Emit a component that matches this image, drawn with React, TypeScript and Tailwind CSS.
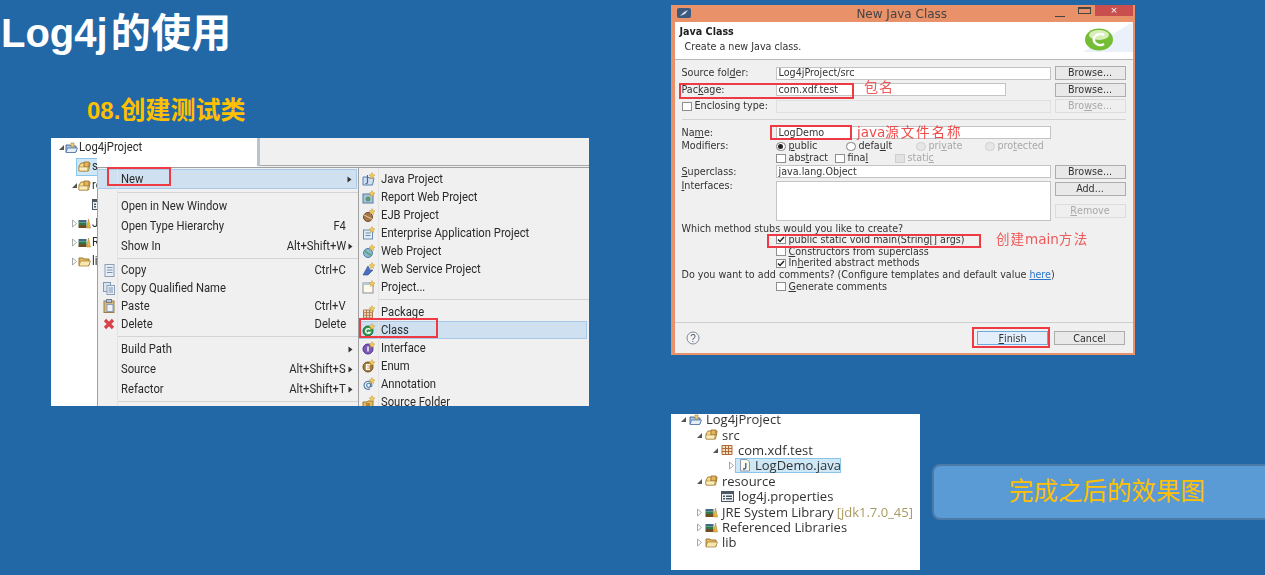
import React from "react";

const Pkg = () => (
  <svg width="13" height="12" viewBox="0 0 13 12" className="shrink-0">
    <path d="M1 5 L3 2 H12 V3 L10.5 10 H1 Z" fill="#f2d98c" stroke="#a8853a" strokeWidth="1" />
    <path d="M6 1 H11 V6 H6 Z" fill="#e2b55a" stroke="#97672a" strokeWidth="0.8" />
    <path d="M1 6 H10 L9.5 10 H1 Z" fill="#fbeebb" stroke="#a8853a" strokeWidth="0.6" />
  </svg>
);
const Project = () => (
  <svg width="13" height="12" viewBox="0 0 13 12" className="shrink-0">
    <path d="M1 3 H5 L6 4 H11 V10 H1 Z" fill="#a9c4e4" stroke="#4d6f9c" />
    <path d="M2.5 6 H12.5 L10.5 10.5 H1 Z" fill="#e4eefa" stroke="#4d6f9c" strokeWidth="0.8" />
    <path d="M6 1 H9 V5 H6 Z" fill="#f0cf72" stroke="#a57f2a" strokeWidth="0.6" />
  </svg>
);
const Books = () => (
  <svg width="13" height="11" viewBox="0 0 13 11" className="shrink-0">
    <rect x="0.5" y="2" width="8" height="2.5" fill="#3f6b88" />
    <rect x="0.5" y="4.5" width="8" height="2.5" fill="#2d7a4b" />
    <rect x="0.5" y="7" width="8" height="3" fill="#6d4c26" />
    <path d="M8.5 10 L10.5 1 L12.5 10 Z" fill="#e8b93c" stroke="#a57f2a" strokeWidth="0.5" />
  </svg>
);
const Folder = () => (
  <svg width="13" height="11" viewBox="0 0 13 11" className="shrink-0">
    <path d="M1 2 H5 L6 3 H11 V9.5 H1 Z" fill="#e2bc65" stroke="#a0792c" />
    <path d="M2.5 5 H12.5 L10.5 10 H1 Z" fill="#f8e7ae" stroke="#a0792c" strokeWidth="0.7" />
  </svg>
);
const PropFile = () => (
  <svg width="13" height="11" viewBox="0 0 13 11" className="shrink-0">
    <rect x="0.5" y="0.5" width="12" height="10" fill="#eef1f4" stroke="#4a5866" />
    <rect x="1" y="1" width="11" height="2" fill="#4a5866" />
    <rect x="2" y="4.5" width="2" height="1.5" fill="#4a5866" />
    <rect x="5" y="4.5" width="6" height="1.5" fill="#4a5866" />
    <rect x="2" y="7" width="2" height="1.5" fill="#4a5866" />
    <rect x="5" y="7" width="6" height="1.5" fill="#4a5866" />
  </svg>
);
const PkgGrid = () => (
  <svg width="12" height="12" viewBox="0 0 12 12" className="shrink-0">
    <path d="M1 1.5 H11 V10.5 H1 Z M1 4.5 H11 M1 7.5 H11 M4.5 1.5 V10.5 M7.5 1.5 V10.5" fill="#f3e3c2" stroke="#b0683a" strokeWidth="1" />
  </svg>
);
const JavaFile = () => (
  <svg width="12" height="13" viewBox="0 0 12 13" className="shrink-0">
    <path d="M1.5 0.5 H8 L10.5 3 V12 H1.5 Z" fill="#fdf9e8" stroke="#8a9ab0" />
    <path d="M6.8 4 V8.6 Q6.8 10 5.4 10 H4" fill="none" stroke="#3a5a9c" strokeWidth="1.3" />
  </svg>
);
const Open = () => (
  <svg width="7" height="7" viewBox="0 0 7 7" className="shrink-0"><path d="M1 6 H6 V1 Z" fill="#555" /></svg>
);
const Closed = () => (
  <svg width="7" height="9" viewBox="0 0 7 9" className="shrink-0"><path d="M1.5 1 L5.5 4.5 L1.5 8 Z" fill="#fff" stroke="#a8a8a8" /></svg>
);
const Chevron = () => (
  <svg width="5" height="7" viewBox="0 0 5 7" className="shrink-0"><path d="M0.5 0.5 L4.5 3.5 L0.5 6.5 Z" fill="#333" /></svg>
);

const CopyIcon = ({ n = 0 }: { n?: number }) => (
  <svg width="12" height="13" viewBox="0 0 12 13">
    {n === 1 && <rect x="0.5" y="0.5" width="7" height="9" fill="#d8e4f0" stroke="#7f9ab8" />}
    <rect x={n === 1 ? 4 : 2} y={n === 1 ? 3.5 : 0.5} width={n === 1 ? 7.5 : 9} height={n === 1 ? 9 : 12} fill="#e8eef6" stroke="#8aa0b8" />
    <path d={n === 1 ? "M5.5 6 H10 M5.5 8 H10 M5.5 10 H10" : "M4 3.5 H9.5 M4 6 H9.5 M4 8.5 H9.5"} stroke="#7b94ae" />
  </svg>
);
const PasteIcon = () => (
  <svg width="12" height="14" viewBox="0 0 12 14">
    <rect x="1" y="2" width="10" height="11.5" fill="#d9b878" stroke="#9a7d48" />
    <rect x="3.5" y="0.5" width="5" height="3" fill="#b9c4d0" stroke="#6f7f90" />
    <rect x="4" y="5.5" width="6" height="7" fill="#eef2f6" stroke="#8aa0b8" />
  </svg>
);
const DeleteIcon = () => (
  <svg width="12" height="12" viewBox="0 0 12 12"><path d="M2 2 L10 10 M10 2 L2 10" stroke="#d8404a" strokeWidth="3.2" /></svg>
);

const Wiz = ({ kind }: { kind: string }) => {
  const star = <path d="M10 0.5 L11 2.5 L13 3 L11.3 4.5 L11.6 6.5 L10 5.5 L8.4 6.5 L8.7 4.5 L7 3 L9 2.5 Z" fill="#efc95a" stroke="#b8902f" strokeWidth="0.4" />;
  const ball = (fill: string, stroke: string, letter: string) => (
    <>
      <circle cx="6" cy="8" r="5" fill={fill} stroke={stroke} />
      <path d={letter} fill="none" stroke="#fff" strokeWidth="1.4" />
    </>
  );
  return (
    <svg width="14" height="14" viewBox="0 0 14 14">
      {kind === "java" && <><path d="M1 5 H6 L7 6 H12 L10.5 13 H1 Z" fill="#cfe0f3" stroke="#5e7fa8" /><path d="M5.5 3 V10 Q5.5 12 3.5 11.5" fill="none" stroke="#4668a0" strokeWidth="1.2" /></>}
      {kind === "report" && <><rect x="1" y="4" width="10" height="9" fill="#a9c6e0" stroke="#587a9c" /><circle cx="6" cy="9" r="2.5" fill="#5a9a6e" /></>}
      {kind === "ejb" && <><circle cx="6" cy="9" r="4.5" fill="#a5764a" stroke="#6f4a28" /><path d="M2 7 L10 11" stroke="#e8d0a8" /></>}
      {kind === "ent" && <><rect x="1.5" y="4" width="9" height="9" fill="#e4edf7" stroke="#6a8cb0" /><path d="M3.5 7 H8.5 M3.5 9.5 H8.5" stroke="#6a8cb0" /></>}
      {kind === "web" && <><circle cx="6" cy="9" r="4.5" fill="#86b8d8" stroke="#4f7d9c" /><path d="M3 7 Q6 10 9 11" stroke="#5fa05f" fill="none" strokeWidth="1.4" /></>}
      {kind === "ws" && <path d="M1 13 L6 4 L8 8 L11 8 L6 13 Z" fill="#4a6fc0" stroke="#2f4d96" strokeWidth="0.6" />}
      {kind === "proj" && <><rect x="1" y="3" width="10" height="10" fill="#fdf8ea" stroke="#8a8f9a" /><rect x="1" y="3" width="10" height="2" fill="#b8c8dc" /></>}
      {kind === "pkg" && <path d="M1.5 5 H10.5 V13 H1.5 Z M1.5 7.7 H10.5 M1.5 10.3 H10.5 M4.5 5 V13 M7.5 5 V13" fill="#f1e2c6" stroke="#b27a50" />}
      {kind === "class" && ball("#2f9a52", "#1c6e36", "M8 6.5 A2.4 2.4 0 1 0 8 9.5 H6")}
      {kind === "int" && ball("#7a58b4", "#503690", "M6 5.5 V10.5")}
      {kind === "enum" && ball("#a77a3a", "#75511f", "M8 5.8 H4.5 V10.2 H8 M4.5 8 H7.5")}
      {kind === "ann" && <path d="M8.5 9 A2 2 0 1 1 8.5 7.5 V9.5 Q10 10 10 8 A4 4 0 1 0 8 11.8" fill="none" stroke="#4a7aa8" strokeWidth="1.1" />}
      {kind === "src" && <><path d="M1 7 H5 L6 6 H11 V13 H1 Z" fill="#e2bc65" stroke="#a0792c" /><path d="M4 8 H8 V12 H4 Z" fill="#b7823a" /></>}
      {star}
    </svg>
  );
};

const Narrow = ({ children, right }: { children: React.ReactNode; right?: boolean }) => (
  <span className={`inline-block whitespace-nowrap scale-x-90 ${right ? "origin-right" : "origin-left"}`}>{children}</span>
);

const Row = ({ label, right, arrow, icon, h = "h-5", active }: { label: string; right?: string; arrow?: boolean; icon?: React.ReactNode; h?: string; active?: boolean }) => (
  <div className={`${h} flex items-center mr-px ${active ? "bg-[#cfe0f1] border border-[#a9c9e8] -ml-px" : ""}`}>
    <span className="w-[20px] ml-[1px] shrink-0 flex justify-center">{icon}</span>
    <span className="ml-[2px]"><Narrow>{label}</Narrow></span>
    {right && <span className="ml-auto"><Narrow right>{right}</Narrow></span>}
    <span className={`w-[9px] shrink-0 mr-[2px] flex justify-center ${right ? "" : "ml-auto"}`}>{arrow && <Chevron />}</span>
  </div>
);
const MenuSep = ({ h }: { h: string }) => (
  <div className={`${h} flex items-center pl-[20px]`}><div className="h-px w-full bg-[#d4d4d4]" /></div>
);

const SubRow = ({ kind, label, active }: { kind: string; label: string; active?: boolean }) => (
  <div className={`h-[18px] flex items-center ${active ? "bg-[#cfe0f1] border border-[#a9c9e8] pl-[2px] mr-[2px]" : "pl-[3px]"}`}>
    <span className="w-[14px] shrink-0 flex"><Wiz kind={kind} /></span>
    <span className="ml-[5px]"><Narrow>{label}</Narrow></span>
  </div>
);

const TreeRow = ({ arrow, icon, label, pl, selected }: { arrow?: React.ReactNode; icon: React.ReactNode; label: string; pl: string; selected?: boolean }) => (
  <div className={`h-[19px] flex items-center whitespace-nowrap ${pl}`}>
    <span className="w-[7px] shrink-0 flex">{arrow}</span>
    <span className={`flex items-center ${selected ? "h-[18px] w-[31px] shrink-0 -ml-[2px] pl-[1px] bg-[#cfe8f8] border border-[#8cc4ea]" : ""}`}>
      <span className="w-[14px] shrink-0 flex">{icon}</span>
      <Narrow>{label}</Narrow>
    </span>
  </div>
);

const ContextShot = () => (
  <div className="relative w-[538px] h-[268px] flex bg-[#f0f0f0] overflow-hidden text-[12.5px] leading-none text-[#2a2a2a] [font-family:Roboto,sans-serif] [filter:blur(0.35px)]">
    <div className="w-[206px] h-full bg-white shrink-0">
      <TreeRow pl="pl-[7px]" arrow={<Open />} icon={<Project />} label="Log4jProject" />
      <div className="w-[46px] overflow-hidden">
        <TreeRow pl="pl-[20px]" icon={<Pkg />} label="src" selected />
        <TreeRow pl="pl-[20px]" arrow={<Open />} icon={<Pkg />} label="resource" />
        <TreeRow pl="pl-[34px]" icon={<PropFile />} label="log4j.properties" />
        <TreeRow pl="pl-[20px]" arrow={<Closed />} icon={<Books />} label="JRE System Library" />
        <TreeRow pl="pl-[20px]" arrow={<Closed />} icon={<Books />} label="Referenced Libraries" />
        <TreeRow pl="pl-[20px]" arrow={<Closed />} icon={<Folder />} label="lib" />
      </div>
    </div>
    <div className="w-[3px] h-[28px] bg-[#b6c3d1] shrink-0" />
    <div className="flex-1 h-[28px] border-b border-[#a8a8a8]" />
    <div className="absolute left-[46px] top-[29px] w-[261px] h-[239px] bg-[#f0f0f0] border-l border-t border-[#a0a0a0] pt-px">
      <div className="absolute left-[19px] top-0 bottom-0 w-px bg-[#e3e3e3]" />
      <Row label="New" arrow active />
      <MenuSep h="h-[7px]" />
      <Row label="Open in New Window" />
      <Row label="Open Type Hierarchy" right="F4" />
      <Row label="Show In" right="Alt+Shift+W" arrow />
      <MenuSep h="h-[5px]" />
      <Row h="h-[18px]" label="Copy" right="Ctrl+C" icon={<CopyIcon />} />
      <Row h="h-[18px]" label="Copy Qualified Name" icon={<CopyIcon n={1} />} />
      <Row h="h-[18px]" label="Paste" right="Ctrl+V" icon={<PasteIcon />} />
      <Row h="h-[18px]" label="Delete" right="Delete" icon={<DeleteIcon />} />
      <MenuSep h="h-[6px]" />
      <Row label="Build Path" arrow />
      <Row label="Source" right="Alt+Shift+S" arrow />
      <Row label="Refactor" right="Alt+Shift+T" arrow />
      <MenuSep h="h-[4px]" />
    </div>
    <div className="absolute left-[307px] top-[29px] w-[231px] h-[239px] bg-[#f0f0f0] border-l border-t border-[#a0a0a0] pt-[2px]">
      <div className="absolute left-[19px] top-0 bottom-0 w-px bg-[#e3e3e3]" />
      <SubRow kind="java" label="Java Project" />
      <SubRow kind="report" label="Report Web Project" />
      <SubRow kind="ejb" label="EJB Project" />
      <SubRow kind="ent" label="Enterprise Application Project" />
      <SubRow kind="web" label="Web Project" />
      <SubRow kind="ws" label="Web Service Project" />
      <SubRow kind="proj" label="Project..." />
      <div className="h-[7px] flex items-center pl-[20px]"><div className="h-px w-full bg-[#d4d4d4]" /></div>
      <SubRow kind="pkg" label="Package" />
      <SubRow kind="class" label="Class" active />
      <SubRow kind="int" label="Interface" />
      <SubRow kind="enum" label="Enum" />
      <SubRow kind="ann" label="Annotation" />
      <div className="h-[13px] overflow-hidden"><SubRow kind="src" label="Source Folder" /></div>
    </div>
    <div className="absolute left-[56px] top-[29px] w-[64px] h-[19px] border-2 border-[#ee3a42]" />
    <div className="absolute left-[308px] top-[180px] w-[79px] h-[20px] border-2 border-[#ee3a42]" />
  </div>
);

const Btn = ({ children, disabled, className = "" }: { children: React.ReactNode; disabled?: boolean; className?: string }) => (
  <div className={`w-[71px] h-[14px] flex items-center justify-center border shrink-0 ${disabled ? "border-[#dcdcdc] text-[#a8a8a8] bg-[#efefef]" : "border-[#adadad] bg-[#e9e9e9] text-[#333]"} ${className}`}>{children}</div>
);
const Inp = ({ children, w = "w-[275px]", disabled }: { children?: React.ReactNode; w?: string; disabled?: boolean }) => (
  <div className={`${w} h-[13px] flex items-center pl-[2px] border shrink-0 ${disabled ? "bg-[#efefef] border-[#e0e0e0]" : "bg-white border-[#c4c4c4]"}`}>{children}</div>
);
const Box = ({ checked, disabled }: { checked?: boolean; disabled?: boolean }) => (
  <span className={`inline-flex items-center justify-center w-[10px] h-[9px] border shrink-0 ${disabled ? "bg-[#e2e2e2] border-[#cfcfcf]" : "bg-white border-[#8e8e8e]"}`}>
    {checked && <svg width="8" height="7" viewBox="0 0 8 7"><path d="M1 3.5 L3 5.5 L7 1" fill="none" stroke="#222" strokeWidth="1.5" /></svg>}
  </span>
);
const Radio = ({ on, disabled }: { on?: boolean; disabled?: boolean }) => (
  <span className={`inline-flex items-center justify-center w-[10px] h-[9px] rounded-full border shrink-0 ${disabled ? "bg-[#e6e6e6] border-[#cfcfcf]" : "bg-white border-[#7e7e7e]"}`}>
    {on && <span className="w-[5px] h-[5px] rounded-full bg-[#222]" />}
  </span>
);
const Label = ({ children }: { children: React.ReactNode }) => <span className="w-[94px] shrink-0">{children}</span>;
const FRow = ({ h = "h-[16.5px]", children }: { h?: string; children: React.ReactNode }) => (
  <div className={`${h} flex items-center`}>{children}</div>
);
const Check = ({ children, checked }: { children: React.ReactNode; checked?: boolean }) => (
  <div className="h-[11.7px] flex items-center pl-[94px] gap-[3px]"><Box checked={checked} /><span>{children}</span></div>
);

const Dialog = () => (
  <div className="relative w-[464px] h-[350px] bg-[#e9926a] pl-[3.5px] pr-[2px] pb-[2px] flex flex-col text-[9.6px] leading-none text-[#333] [font-family:'DejaVu_Sans',sans-serif] [filter:blur(0.35px)]">
    <div className="h-[17px] shrink-0 relative flex items-center justify-center text-[12px] pr-[4px] text-[#444]">
      <span className="absolute left-[2px] top-[3px] w-[14px] h-[10px] rounded-[2px] bg-[#3c5a80] flex items-center justify-center">
        <svg width="10" height="8" viewBox="0 0 10 8"><path d="M1 7 L5 3 L9 1 L6 5 Z" fill="#d8e4f0" /></svg>
      </span>
      <span>New Java Class</span>
      <span className="absolute right-[68px] top-[11px] w-[10px] h-px bg-[#444]" />
      <span className="absolute right-[42px] top-[2px] w-[13px] h-[7px] border border-[#444] border-t-2" />
      <span className="absolute right-0 top-0 w-[38px] h-[11px] bg-[#c94f4f] flex items-center justify-center text-white text-[9px]">×</span>
    </div>
    <div className="h-[38px] shrink-0 bg-white border-b border-[#b8b8b8] relative pl-[5px] pt-[5px] overflow-hidden">
      <div className="absolute right-0 top-0 w-[50px] h-[30px] bg-[#eaf1fa] [clip-path:polygon(100%_0,100%_100%,0_100%)]" />
      <div className="font-bold text-[#222]">Java Class</div>
      <div className="mt-[5px] pl-[5px]">Create a new Java class.</div>
      <svg className="absolute right-[19px] top-[6px]" width="30" height="23" viewBox="0 0 30 23">
        <ellipse cx="15" cy="11.5" rx="14" ry="11" fill="#74bd35" />
        <ellipse cx="15" cy="7" rx="10" ry="5" fill="#d6eeb8" />
        <path d="M20 7 A6.5 5.5 0 1 0 20 16" fill="none" stroke="#fff" strokeWidth="2.6" />
      </svg>
    </div>
    <div className="flex-1 bg-[#f0f0f0] flex flex-col pl-[7px] pr-[7px] pt-[5px]">
      <FRow><Label>Source fol<u>d</u>er:</Label><Inp>Log4jProject/src</Inp><Btn className="ml-[4px]">Browse...</Btn></FRow>
      <FRow><Label>Pac<u>k</u>age:</Label><Inp w="w-[230px]">com.xdf.test</Inp><Btn className="ml-[49px]">Browse...</Btn></FRow>
      <FRow><span className="w-[94px] shrink-0 flex items-center gap-[3px]"><Box />Enclosing type:</span><Inp disabled /><Btn disabled className="ml-[4px]">Bro<u>w</u>se...</Btn></FRow>
      <div className="h-px bg-[#d2d2d2] mt-[4px] mb-[6.5px]" />
      <FRow h="h-[13px]"><Label>Na<u>m</u>e:</Label><Inp>LogDemo</Inp></FRow>
      <FRow h="h-[14px]"><Label>Modifiers:</Label>
        <span className="flex items-center gap-[3px] w-[70px]"><Radio on /><span><u>p</u>ublic</span></span>
        <span className="flex items-center gap-[3px] w-[70px]"><Radio /><span>defa<u>u</u>lt</span></span>
        <span className="flex items-center gap-[3px] w-[69px] text-[#a8a8a8]"><Radio disabled /><span>pri<u>v</u>ate</span></span>
        <span className="flex items-center gap-[3px] text-[#a8a8a8]"><Radio disabled /><span>pro<u>t</u>ected</span></span>
      </FRow>
      <FRow h="h-[10px]"><span className="w-[94px] shrink-0" />
        <span className="flex items-center gap-[3px] w-[59px]"><Box /><span>abs<u>t</u>ract</span></span>
        <span className="flex items-center gap-[3px] w-[60px]"><Box /><span>fina<u>l</u></span></span>
        <span className="flex items-center gap-[3px] text-[#a8a8a8]"><Box disabled /><span>stati<u>c</u></span></span>
      </FRow>
      <FRow h="h-[17px]"><Label><u>S</u>uperclass:</Label><Inp>java.lang.Object</Inp><Btn className="ml-[4px]">Browse...</Btn></FRow>
      <div className="h-[40px] flex mt-[1px]">
        <span className="w-[94px] shrink-0"><u>I</u>nterfaces:</span>
        <div className="w-[275px] h-[40px] bg-white border border-[#c4c4c4] shrink-0" />
        <div className="ml-[4px] pt-px flex flex-col gap-[8px]"><Btn>Add...</Btn><Btn disabled><u>R</u>emove</Btn></div>
      </div>
      <div className="h-[11px] mt-[2px] flex items-center">Which method stubs would you like to create?</div>
      <Check checked>public static void main(String[] args)</Check>
      <Check><u>C</u>onstructors from superclass</Check>
      <Check checked>In<u>h</u>erited abstract methods</Check>
      <div className="h-[11.7px] flex items-center">Do you want to add comments? (Configure templates and default value <u className="text-[#2a76c8] ml-[3px]">here</u>)</div>
      <Check><u>G</u>enerate comments</Check>
      <div className="h-px bg-[#cfcfcf] -ml-[7px] -mr-[7px] mt-[30px]" />
      <div className="flex items-center justify-between mt-[8px] pr-px">
        <svg width="14" height="14" viewBox="0 0 14 14" className="ml-[4px]"><circle cx="7" cy="7" r="6" fill="#f4f4f4" stroke="#7a8a98" /><text x="7" y="10.5" textAnchor="middle" fontSize="10" fill="#556" fontFamily="Liberation Sans">?</text></svg>
        <div className="flex gap-[6px]">
          <Btn className="border-[#6fa8dc]! bg-[#e2eefa]!"><u>F</u>inish</Btn>
          <Btn>Cancel</Btn>
        </div>
      </div>
    </div>
    <div className="absolute left-[8px] top-[78px] w-[175px] h-[16px] border-2 border-[#ee3a42]" />
    <div className="absolute left-[193px] top-[74px] text-[14px] tracking-[1px] text-[#ef5a5a] [font-family:'Noto_Sans_CJK_SC',sans-serif]">包名</div>
    <div className="absolute left-[99px] top-[120px] w-[82px] h-[15px] border-2 border-[#ee3a42]" />
    <div className="absolute left-[186px] top-[121px] text-[13.5px] text-[#ef4a4a] whitespace-nowrap [font-family:'DejaVu_Sans','Noto_Sans_CJK_SC',sans-serif]">java<span className="tracking-[1.9px]">源文件名称</span></div>
    <div className="absolute left-[96px] top-[229px] w-[214px] h-[14px] border-2 border-[#ee3a42]" />
    <div className="absolute left-[325px] top-[228px] text-[13.5px] text-[#ef5a5a] whitespace-nowrap [font-family:'DejaVu_Sans','Noto_Sans_CJK_SC',sans-serif]"><span className="tracking-[1px]">创建</span>main<span className="tracking-[1.5px]">方法</span></div>
    <div className="absolute left-[301px] top-[322px] w-[78px] h-[21px] border-2 border-[#ee3a42]" />
  </div>
);

const T = ({ pl, arrow, icon, children }: { pl: string; arrow?: React.ReactNode; icon: React.ReactNode; children: React.ReactNode }) => (
  <div className={`h-[15.4px] flex items-center whitespace-nowrap ${pl}`}>
    <span className="w-[9px] shrink-0 flex">{arrow}</span>
    <span className="w-[17px] shrink-0 flex">{icon}</span>
    {children}
  </div>
);

const ResultTree = () => (
  <div className="w-[249px] h-[156px] shrink-0 bg-white overflow-hidden text-[13px] leading-none text-[#333] [font-family:'Open_Sans',sans-serif] [filter:blur(0.3px)]">
    <div className="-mt-[2px]">
      <T pl="pl-[9px]" arrow={<Open />} icon={<Project />}>Log4jProject</T>
      <T pl="pl-[25px]" arrow={<Open />} icon={<Pkg />}>src</T>
      <T pl="pl-[41px]" arrow={<Open />} icon={<PkgGrid />}>com.xdf.test</T>
      <div className="h-[15.4px] flex items-center pl-[57px] whitespace-nowrap">
        <span className="w-[7px] shrink-0 flex"><Closed /></span>
        <span className="h-[15px] w-[106px] flex items-center bg-[#cfe8f8] border border-[#8cc4ea] pl-[3px]">
          <span className="w-[16px] shrink-0 flex"><JavaFile /></span>LogDemo.java
        </span>
      </div>
      <T pl="pl-[25px]" arrow={<Open />} icon={<Pkg />}>resource</T>
      <T pl="pl-[41px]" icon={<PropFile />}>log4j.properties</T>
      <T pl="pl-[25px]" arrow={<Closed />} icon={<Books />}>JRE System Library<span className="ml-[3px] text-[#a89a62]">[jdk1.7.0_45]</span></T>
      <T pl="pl-[25px]" arrow={<Closed />} icon={<Books />}>Referenced Libraries</T>
      <T pl="pl-[25px]" arrow={<Closed />} icon={<Folder />}>lib</T>
    </div>
  </div>
);

export default function App() {
  return (
    <div className="w-[1265px] h-[575px] bg-[#2268a6] overflow-hidden flex [font-family:'Liberation_Sans','Noto_Sans_CJK_SC',sans-serif]">
      <div className="w-[671px] shrink-0">
        <h1 className="mt-[8px] ml-[1px] h-[50px] text-[40px] leading-[50px] font-bold text-white whitespace-nowrap">Log4j<span className="ml-[3px] tracking-[0.25px]">的使用</span></h1>
        <p className="mt-[38px] ml-[87px] h-[28px] text-[24px] leading-[28px] font-bold text-[#ffc000] whitespace-nowrap">08.<span className="text-[25px]">创建测试类</span></p>
        <div className="mt-[14px] ml-[51px]"><ContextShot /></div>
      </div>
      <div className="w-[594px] shrink-0 pt-[5px]">
        <Dialog />
        <div className="flex mt-[59px]">
          <ResultTree />
          <div className="ml-[12px] mt-[50px] w-[345px] shrink-0 h-[56px] rounded-[8px] bg-[#5b9bd5] border-2 border-[#4a7aa8] flex items-center pl-[75px] text-[24.5px] text-[#ffc000] whitespace-nowrap">
            完成之后的效果图
          </div>
        </div>
      </div>
    </div>
  );
}
